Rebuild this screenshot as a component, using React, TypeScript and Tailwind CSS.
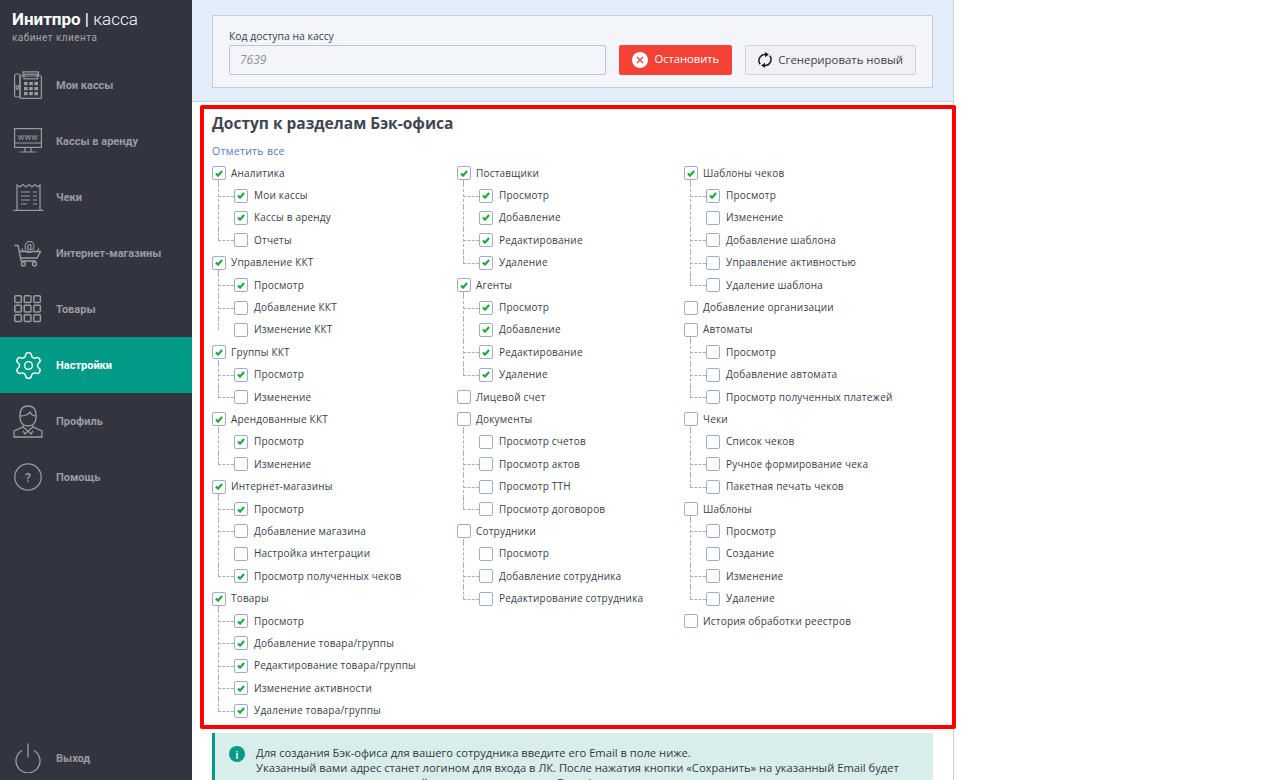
import { Settings } from "lucide-react";
import type { ReactNode } from "react";

const ICON = "#9a9ca3";

function PhoneIcon() {
  return (
    <svg width="28" height="28" viewBox="0 0 28 28" fill="none" stroke={ICON} strokeWidth="1.2">
      <rect x="0.6" y="3" width="5.4" height="23" rx="1.5" />
      <rect x="6" y="5" width="21.4" height="22.4" rx="1" />
      <path d="M9 5V0.8h15.5V5" />
      <rect x="10" y="3.2" width="13.5" height="4.6" />
      <rect x="2.2" y="15" width="2.4" height="3" />
      {[10, 15.2, 20.4].map((x) =>
        [11, 16, 21].map((y) => <rect key={`${x}-${y}`} x={x} y={y} width="3.6" height="3.2" fill={ICON} stroke="none" />)
      )}
    </svg>
  );
}

function WwwIcon() {
  return (
    <svg width="28" height="26" viewBox="0 0 28 26" fill="none" stroke={ICON} strokeWidth="1.2">
      <rect x="0.6" y="0.6" width="26.8" height="18.8" />
      <path d="M0.6 15h26.8M11 19.5v4M17 19.5v4M5.5 24h17" />
      <text x="14" y="11.5" textAnchor="middle" fontSize="9" stroke="none" fill={ICON} style={{ fontFamily: "Roboto, sans-serif" }}>
        www
      </text>
    </svg>
  );
}

function ReceiptIcon() {
  return (
    <svg width="31" height="28" viewBox="0 0 31 28" fill="none" stroke={ICON} strokeWidth="1.2">
      <path d="M4 27V2l3 2 3-2.5 3 2.5 3-2.5 3 2.5 3-2.5 3 2.5 2-2V27" />
      <path d="M0.5 27.4h30" />
      <path d="M8 9h9M20 9h4M8 13h9M20 13h4M8 17h9M20 17h4M8 21h6M20 21h4" />
    </svg>
  );
}

function CartIcon() {
  return (
    <svg width="28" height="28" viewBox="0 0 28 28" fill="none" stroke={ICON} strokeWidth="1.3">
      <path d="M0.5 6.5h3.6l3 15.5h15" />
      <path d="M5 12.5h21.5l-3.4 6.5H6.5" />
      <path d="M9 12.5l-1-3M23 12.5l2-3" />
      <circle cx="9.5" cy="25" r="2" />
      <circle cx="20.5" cy="25" r="2" />
      <text x="15.5" y="10.5" textAnchor="middle" fontSize="12" fontWeight="500" stroke="none" fill={ICON} style={{ fontFamily: "Roboto, sans-serif" }}>
        @
      </text>
    </svg>
  );
}

function GridIcon() {
  return (
    <svg width="28" height="28" viewBox="0 0 28 28" fill="none" stroke={ICON} strokeWidth="1.5">
      {[0.8, 10.3, 19.8].map((x) =>
        [0.8, 10.3, 19.8].map((y) => <rect key={`${x}-${y}`} x={x} y={y} width="6.6" height="6.6" rx="1" />)
      )}
    </svg>
  );
}

function ProfileIcon() {
  return (
    <svg width="30" height="33" viewBox="0 0 30 33" fill="none" stroke={ICON} strokeWidth="1.3">
      <path d="M7 10c0-6 3-9 8-9s8 3 8 9v3c0 5-4 8-8 8s-8-3-8-8z" />
      <path d="M7 11c4 0 8-1 10-4 1 2 3 4 6 4" />
      <path d="M10 20v2L1 26v6h28v-6l-9-4v-2" />
      <path d="M10 22l5 4 5-4M15 26l-3 3-2-3M15 26l3 3 2-3" />
    </svg>
  );
}

function HelpIcon() {
  return (
    <svg width="28" height="28" viewBox="0 0 28 28" fill="none" stroke={ICON} strokeWidth="1.3">
      <circle cx="14" cy="14" r="13.2" />
      <text x="14" y="18.5" textAnchor="middle" fontSize="12" fontWeight="500" stroke="none" fill={ICON} style={{ fontFamily: "Roboto, sans-serif" }}>
        ?
      </text>
    </svg>
  );
}

function PowerIcon() {
  return (
    <svg width="26" height="30" viewBox="0 0 26 30" fill="none" stroke={ICON} strokeWidth="1.3">
      <path d="M7 7.5a12 12 0 1 0 12 0" />
      <path d="M13 0.5v14" />
    </svg>
  );
}

const navItems: { label: string; icon: ReactNode; active?: boolean }[] = [
  { label: "Мои кассы", icon: <PhoneIcon /> },
  { label: "Кассы в аренду", icon: <WwwIcon /> },
  { label: "Чеки", icon: <ReceiptIcon /> },
  { label: "Интернет-магазины", icon: <CartIcon /> },
  { label: "Товары", icon: <GridIcon /> },
  { label: "Настройки", icon: <Settings size={31} strokeWidth={1.1} />, active: true },
  { label: "Профиль", icon: <ProfileIcon /> },
  { label: "Помощь", icon: <HelpIcon /> },
];

function NavRow({ label, icon, active }: { label: string; icon: ReactNode; active?: boolean }) {
  return (
    <div className={`flex h-14 items-center ${active ? "bg-[#009a87] text-white" : "text-[#9a9ca3]"}`}>
      <div className="flex w-14 shrink-0 items-center justify-center">{icon}</div>
      <span className="pt-[2px] text-[11px] font-bold">{label}</span>
    </div>
  );
}

function Sidebar() {
  return (
    <aside className="flex h-[780px] w-48 shrink-0 flex-col bg-[#32353f] font-['Roboto',sans-serif]">
      <div className="h-[57px] pl-3 pt-[9px]">
        <div className="text-[17px] leading-[20px] text-white">
          <span className="font-bold">Инитпро</span> | <span className="font-light">касса</span>
        </div>
        <div className="mt-[2px] text-[10px] leading-[14px] tracking-[0.45px] text-[#a3a5ac]">кабинет клиента</div>
      </div>
      {navItems.map((item) => (
        <NavRow key={item.label} {...item} />
      ))}
      <div className="mt-auto">
        <div className="mb-[-6px] flex h-14 items-center text-[#9a9ca3]">
          <div className="flex w-14 shrink-0 items-center justify-center">
            <PowerIcon />
          </div>
          <span className="pt-[2px] text-[11px] font-bold">Выход</span>
        </div>
      </div>
    </aside>
  );
}

function Checkbox({ checked }: { checked?: boolean }) {
  return (
    <span className="relative z-10 flex h-[14px] w-[14px] shrink-0 items-center justify-center rounded-[2px] border border-[#9fadcc] bg-white">
      {checked && (
        <svg width="8" height="7" viewBox="0 0 9 8" fill="none" stroke="#16a83a" strokeWidth="2.4">
          <path d="M1 4l2.4 2.4L8 1.2" />
        </svg>
      )}
    </span>
  );
}

type Child = { t: string; c?: boolean; nd?: boolean };
type Group = { t: string; c?: boolean; items?: Child[] };

const DASH = "border-[#a6aec8]";

function ChildRow({ item, last }: { item: Child; last: boolean }) {
  return (
    <div className="relative flex h-[22.4px] items-center gap-[6px] pl-[22px]">
      <span className={`absolute left-[6px] top-0 border-l border-dashed ${DASH} ${last ? "h-1/2" : "h-full"}`} />
      {!item.nd && <span className={`absolute left-[6px] top-1/2 w-[16px] border-t border-dashed ${DASH}`} />}
      <Checkbox checked={item.c} />
      <span>{item.t}</span>
    </div>
  );
}

function GroupBlock({ group }: { group: Group }) {
  return (
    <div>
      <div className="relative flex h-[22.4px] items-center gap-[5px]">
        {group.items && <span className={`absolute bottom-0 left-[6px] h-[4px] border-l border-dashed ${DASH}`} />}
        <Checkbox checked={group.c} />
        <span>{group.t}</span>
      </div>
      {group.items?.map((item, i) => (
        <ChildRow key={item.t} item={item} last={i === group.items!.length - 1} />
      ))}
    </div>
  );
}

const col1: Group[] = [
  { t: "Аналитика", c: true, items: [{ t: "Мои кассы", c: true }, { t: "Кассы в аренду", c: true, nd: true }, { t: "Отчеты" }] },
  { t: "Управление ККТ", c: true, items: [{ t: "Просмотр", c: true }, { t: "Добавление ККТ" }, { t: "Изменение ККТ", nd: true }] },
  { t: "Группы ККТ", c: true, items: [{ t: "Просмотр", c: true }, { t: "Изменение" }] },
  { t: "Арендованные ККТ", c: true, items: [{ t: "Просмотр", c: true, nd: true }, { t: "Изменение" }] },
  {
    t: "Интернет-магазины",
    c: true,
    items: [
      { t: "Просмотр", c: true },
      { t: "Добавление магазина" },
      { t: "Настройка интеграции", nd: true },
      { t: "Просмотр полученных чеков", c: true },
    ],
  },
  {
    t: "Товары",
    c: true,
    items: [
      { t: "Просмотр", c: true },
      { t: "Добавление товара/группы", c: true },
      { t: "Редактирование товара/группы", c: true },
      { t: "Изменение активности", c: true },
      { t: "Удаление товара/группы", c: true },
    ],
  },
];

const col2: Group[] = [
  {
    t: "Поставщики",
    c: true,
    items: [{ t: "Просмотр", c: true }, { t: "Добавление", c: true, nd: true }, { t: "Редактирование", c: true }, { t: "Удаление", c: true }],
  },
  {
    t: "Агенты",
    c: true,
    items: [{ t: "Просмотр", c: true }, { t: "Добавление", c: true, nd: true }, { t: "Редактирование", c: true }, { t: "Удаление", c: true }],
  },
  { t: "Лицевой счет" },
  {
    t: "Документы",
    items: [{ t: "Просмотр счетов", nd: true }, { t: "Просмотр актов" }, { t: "Просмотр ТТН" }, { t: "Просмотр договоров" }],
  },
  { t: "Сотрудники", items: [{ t: "Просмотр", nd: true }, { t: "Добавление сотрудника" }, { t: "Редактирование сотрудника" }] },
];

const col3: Group[] = [
  {
    t: "Шаблоны чеков",
    c: true,
    items: [
      { t: "Просмотр", c: true },
      { t: "Изменение", nd: true },
      { t: "Добавление шаблона" },
      { t: "Управление активностью" },
      { t: "Удаление шаблона" },
    ],
  },
  { t: "Добавление организации" },
  { t: "Автоматы", items: [{ t: "Просмотр" }, { t: "Добавление автомата" }, { t: "Просмотр полученных платежей" }] },
  { t: "Чеки", items: [{ t: "Список чеков", nd: true }, { t: "Ручное формирование чека" }, { t: "Пакетная печать чеков" }] },
  { t: "Шаблоны", items: [{ t: "Просмотр" }, { t: "Создание", nd: true }, { t: "Изменение" }, { t: "Удаление" }] },
  { t: "История обработки реестров" },
];

function Column({ groups, className }: { groups: Group[]; className: string }) {
  return (
    <div className={className}>
      {groups.map((g) => (
        <GroupBlock key={g.t} group={g} />
      ))}
    </div>
  );
}

function RefreshIcon() {
  return (
    <svg width="14" height="16" viewBox="0 0 14 16" fill="none" stroke="#1b1e26" strokeWidth="1.5">
      <path d="M2.2 12.2A6 6 0 0 1 7.4 2.6" />
      <path d="M11.8 3.8A6 6 0 0 1 6.6 13.4" />
      <path d="M7 0l4 2.6L7 5.2z" fill="#1b1e26" stroke="none" />
      <path d="M7 10.8L3 13.4 7 16z" fill="#1b1e26" stroke="none" />
    </svg>
  );
}

export default function App() {
  return (
    <div className="flex h-[780px] overflow-hidden bg-white font-['Open_Sans',sans-serif]">
      <Sidebar />
      <main className="h-[780px] w-[762px] shrink-0 border-r border-[#c5d1e0]">
        <div className="h-[102px] border-b border-[#c5d1e0] bg-[#e2effb] px-5 pt-[15px]">
          <div className="flex h-[73px] items-start gap-[13px] border border-[#c8ccd4] bg-[#f3f5fa] px-4 pt-[13px]">
            <div className="w-[378px] text-[10.4px] leading-[14px] text-[#3d4250]">
              <div className="mb-[2px]">Код доступа на кассу</div>
              <div className="flex h-[30px] items-center rounded-[2px] border border-[#b9c6da] bg-[#f3f5fa] pl-[10px] text-[12px] italic text-[#8b909c]">
                7639
              </div>
            </div>
            <div className="mt-[16px] flex h-[30px] w-[113px] items-center justify-center gap-[6px] rounded-[2px] bg-[#f44336] pb-[1px] text-[11.2px] text-white">
              <span className="flex h-[16px] w-[16px] items-center justify-center rounded-full bg-white">
                <svg width="8" height="8" viewBox="0 0 8 8" stroke="#f44336" strokeWidth="1.4">
                  <path d="M1 1l6 6M7 1L1 7" />
                </svg>
              </span>
              Остановить
            </div>
            <div className="mt-[16px] flex h-[30px] w-[171px] items-center justify-center gap-[6px] rounded-[2px] border border-[#cfd1d8] bg-[#f0f0f5] pb-[1px] text-[11.4px] text-[#3d4250]">
              <RefreshIcon />
              Сгенерировать новый
            </div>
          </div>
        </div>

        <section className="ml-2 mt-[3px] h-[624px] w-[756px] rounded-[2px] border-4 border-[#ff0000] bg-white px-2 text-[10px] text-[#3a3e4a]">
          <h2 className="pt-[2px] text-[15.5px] font-bold leading-[24px] text-[#404552]">Доступ к разделам Бэк-офиса</h2>
          <div className="mt-[8px] h-[16px] text-[10.5px] leading-[16px] tracking-[0.3px] text-[#5b76c4]">Отметить все</div>
          <div className="mt-[3px] flex tracking-[0.2px]">
            <Column groups={col1} className="w-[245px]" />
            <Column groups={col2} className="w-[227px]" />
            <Column groups={col3} className="flex-1" />
          </div>
        </section>

        <div className="ml-5 mt-[4px] flex h-[60px] w-[721px] gap-[11px] border-l-[3px] border-[#009a87] bg-[#d9eeeb] pl-[14px] pt-[12px] text-[11.2px] leading-[15px] text-[#333740]">
          <span className="mt-[1px] flex h-4 w-4 shrink-0 items-center justify-center rounded-full bg-[#009a87] text-[11px] font-bold text-[#d9eeeb]">
            i
          </span>
          <div>
            <div>Для создания Бэк-офиса для вашего сотрудника введите его Email в поле ниже.</div>
            <div>Указанный вами адрес станет логином для входа в ЛК. После нажатия кнопки «Сохранить» на указанный Email будет</div>
            <div>отправлено письмо со ссылкой и паролем для входа в Бэк-офис.</div>
          </div>
        </div>
      </main>
    </div>
  );
}
